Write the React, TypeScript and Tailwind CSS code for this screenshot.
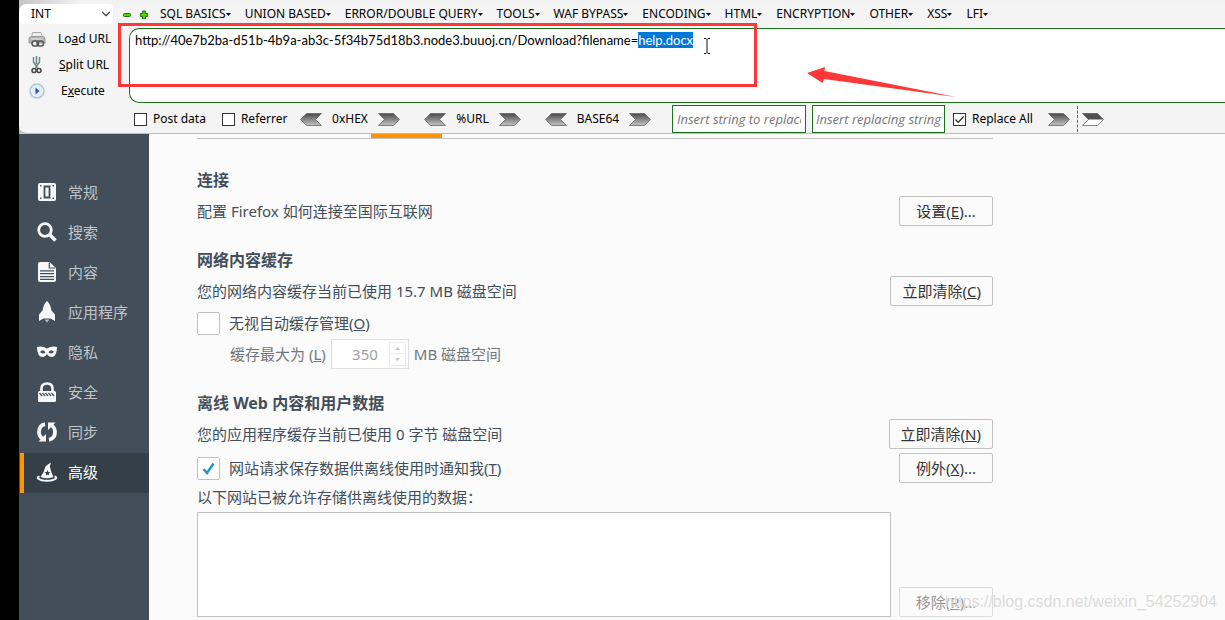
import { useEffect, useRef } from 'react'
import type { ReactNode } from 'react'
import { ChevronDown } from 'lucide-react'

const menus = ['SQL BASICS', 'UNION BASED', 'ERROR/DOUBLE QUERY', 'TOOLS', 'WAF BYPASS', 'ENCODING', 'HTML', 'ENCRYPTION', 'OTHER', 'XSS', 'LFI']

const url = 'http://40e7b2ba-d51b-4b9a-ab3c-5f34b75d18b3.node3.buuoj.cn/Download?filename=help.docx'

function Arrow({ left, hollow, label }: { left?: boolean; hollow?: boolean; label: string }) {
  return (
    <button aria-label={label} className="shrink-0">
      <svg width="22" height="13" viewBox="0 0 22 13" className={left ? 'rotate-180' : ''}>
        <defs>
          <linearGradient id="metal" x1="0" y1="0" x2="0" y2="1">
            <stop offset="0" stopColor="#4a4a4a" />
            <stop offset="1" stopColor="#c4c4c4" />
          </linearGradient>
          <linearGradient id="metalUp" x1="0" y1="1" x2="0" y2="0">
            <stop offset="0" stopColor="#4a4a4a" />
            <stop offset="1" stopColor="#c4c4c4" />
          </linearGradient>
        </defs>
        <path d="M0.5 0.5H15.5L21.5 6.5 15.5 12.5H0.5L6.5 6.5Z" fill={hollow ? '#fff' : left ? 'url(#metalUp)' : 'url(#metal)'} stroke="#666" strokeWidth="0.8" />
        {hollow && <path d="M0.5 0.5H15.5L21.5 6.5H6.5Z" fill="#505050" />}
      </svg>
    </button>
  )
}

function Codec({ name, className }: { name: string; className: string }) {
  return (
    <div className={`flex items-center justify-between ${className}`}>
      <Arrow left label={`${name} decode`} />
      <span>{name}</span>
      <Arrow label={`${name} encode`} />
    </div>
  )
}

function SmallCheck({ label, checked }: { label: string; checked?: boolean }) {
  return (
    <label className="flex items-center gap-[6px] whitespace-nowrap">
      <span className="relative flex">
        <input type="checkbox" defaultChecked={checked} className="peer size-[13px] appearance-none border border-[#333] bg-white" />
        <svg viewBox="0 0 13 13" className="pointer-events-none absolute inset-0 hidden size-[13px] peer-checked:block">
          <path d="M2.5 6.5L5.2 9.3 10.7 3.5" fill="none" stroke="#222" strokeWidth="1.2" />
        </svg>
      </span>
      {label}
    </label>
  )
}

function Toolbar() {
  const box = useRef<HTMLTextAreaElement>(null)

  useEffect(() => {
    box.current?.focus()
    box.current?.setSelectionRange(url.length - 9, url.length)
  }, [])

  return (
    <header className="relative bg-linear-to-r from-[#c4c4c4] to-[#f2f2f2] to-[60px] pt-1 text-[12px] leading-4 text-black">
      <div className="h-[130px] overflow-hidden rounded-l-lg border-b border-[#bdbdbd] bg-[#f4f4f4]">
        <div className="flex h-5 items-center">
          <div className="relative">
            <select aria-label="Type" className="h-5 w-[94px] appearance-none rounded-sm bg-white pl-3 leading-4">
              <option>INT</option>
            </select>
            <ChevronDown size={14} strokeWidth={2} className="pointer-events-none absolute top-[3px] right-0 text-[#444]" />
          </div>
          <button aria-label="Remove" className="ml-[10px]">
            <svg width="8" height="9" viewBox="0 0 8 9"><rect x="0.5" y="3.5" width="7" height="3" rx="1" fill="#4fd10a" stroke="#1c7a00" /></svg>
          </button>
          <button aria-label="Add" className="ml-[9px]">
            <svg width="8" height="9" viewBox="0 0 8 9"><path d="M2.5 1H5.5V3.5H7.5V6.5H5.5V8.5H2.5V6.5H0.5V3.5H2.5Z" fill="#4fd10a" stroke="#1c7a00" /></svg>
          </button>
          <nav className="ml-3 flex gap-[14px] whitespace-nowrap">
            {menus.map((m) => (
              <button key={m} className="flex items-center">
                {m}
                <svg width="5" height="3" viewBox="0 0 5 3"><path d="M0 0H5L2.5 3Z" fill="#111" /></svg>
              </button>
            ))}
          </nav>
        </div>
        <div className="flex">
          <div className="flex w-[110px] shrink-0 flex-col pt-[2px]">
            <button className="flex h-[26px] items-center pl-[9px]">
              <svg width="18" height="18" viewBox="0 0 18 18">
                <path d="M4.5 2.5H13L14.5 7H3.5Z" fill="#eee" stroke="#aaa" />
                <path d="M1 9Q1 6.5 3.5 6.5H14.5Q17 6.5 17 9V13H1Z" fill="#b4b4b4" stroke="#999" />
                <path d="M3 9H15" stroke="#e6e6e6" />
                <rect x="4" y="11" width="6.5" height="5" rx="2.5" fill="#eee" stroke="#555" strokeWidth="1.5" />
                <rect x="9" y="11" width="6.5" height="5" rx="2.5" fill="none" stroke="#555" strokeWidth="1.5" />
              </svg>
              <span className="ml-3">Lo<u>a</u>d URL</span>
            </button>
            <button className="flex h-[26px] items-center pl-[9px]">
              <svg width="18" height="20" viewBox="0 0 18 20">
                <path d="M5.5 2V7L9.5 13M11.5 2V7L7.5 13M8.5 1V9" fill="none" stroke="#6c898c" strokeWidth="1.5" />
                <circle cx="6" cy="15.5" r="2" fill="none" stroke="#444" strokeWidth="1.5" />
                <circle cx="11" cy="15.5" r="2" fill="none" stroke="#444" strokeWidth="1.5" />
              </svg>
              <span className="ml-[13px]"><u>S</u>plit URL</span>
            </button>
            <button className="flex h-[26px] items-center pl-[9px]">
              <svg width="18" height="18" viewBox="0 0 18 18">
                <circle cx="9" cy="9" r="7" fill="#e3eefb" stroke="#b3c3dc" strokeWidth="1.5" />
                <path d="M7.5 5.5L11.5 9 7.5 12.5Z" fill="#2159b8" />
              </svg>
              <span className="ml-[15px]">E<u>x</u>ecute</span>
            </button>
          </div>
          <div className="min-w-0 flex-1 pt-1">
            <textarea ref={box} aria-label="URL" spellCheck={false} defaultValue={url} className="block h-[75px] w-full resize-none rounded-l-[10px] border border-r-0 border-[#1b741b] bg-white px-[5px] py-[3px] font-['Lato',sans-serif] text-[13px] leading-4 caret-transparent outline-none selection:bg-[#0078d7] selection:text-white" />
          </div>
        </div>
        <div className="flex h-[29px] items-center pt-px pl-[115px]">
          <div className="flex w-[166px] gap-4">
            <SmallCheck label="Post data" />
            <SmallCheck label="Referrer" />
          </div>
          <Codec name="0xHEX" className="w-[100px]" />
          <Codec name="%URL" className="ml-6 w-[97px]" />
          <Codec name="BASE64" className="ml-6 w-[106px]" />
          <input aria-label="Search" placeholder="Insert string to replace" className="ml-[21px] h-7 w-[134px] border border-[#1b741b] bg-white px-1 font-['Open_Sans',sans-serif] text-[13px] italic placeholder:text-[#757575]" />
          <input aria-label="Replacement" placeholder="Insert replacing string" className="mr-2 ml-[6px] h-7 w-[133px] border border-[#1b741b] bg-white pl-[3px] font-['Open_Sans',sans-serif] text-[13px] italic placeholder:text-[#757575]" />
          <div className="flex w-[95px]">
            <SmallCheck label="Replace All" checked />
          </div>
          <Arrow label="Replace" />
          <div className="mr-1 ml-[7px] h-[26px] border-l border-dashed border-[#666]" />
          <Arrow hollow label="Replace in selection" />
        </div>
      </div>
      <div className="pointer-events-none absolute top-[23px] left-[99px] h-[64px] w-[639px] border-3 border-[#fd3838]" />
      <svg width="8" height="18" viewBox="0 0 8 18" className="pointer-events-none absolute top-[37px] left-[684px]">
        <path d="M1 1.5H3L4 2.5 5 1.5H7M4 2.5V15.5M1 16.5H3L4 15.5 5 16.5H7" fill="none" stroke="#111" />
      </svg>
      <svg width="150" height="31" viewBox="0 0 150 31" className="pointer-events-none absolute top-[67px] left-[788px]">
        <path d="M0 6L18 0 17.5 4 149 30 17 12 15.5 16Z" fill="#fd3838" />
      </svg>
    </header>
  )
}

const items: { name: string; icon: ReactNode }[] = [
  {
    name: '常规',
    icon: (
      <>
        <rect x="1" y="1" width="18" height="18" rx="2" fill="currentColor" />
        <path d="M7.5 4.5H12.5V15.5H7.5Z" fill="none" stroke="#424f5a" strokeWidth="1.8" />
        <path d="M3 3H4.5V4.5H3ZM15.5 3H17V4.5H15.5ZM3 15.5H4.5V17H3ZM15.5 15.5H17V17H15.5Z" fill="#424f5a" />
      </>
    ),
  },
  {
    name: '搜索',
    icon: (
      <>
        <circle cx="8" cy="8" r="6.3" fill="none" stroke="currentColor" strokeWidth="2.8" />
        <path d="M12.5 12.5L18.5 18.5" stroke="currentColor" strokeWidth="3.6" />
      </>
    ),
  },
  {
    name: '内容',
    icon: (
      <>
        <path d="M3 0H12.5L19 6V18Q19 20 17 20H3Q1 20 1 18V2Q1 0 3 0Z" fill="currentColor" />
        <path d="M12.3 0.5V6H18.5M3 8.8H17M3 11.7H17M3 14.6H17M3 17.3H17" fill="none" stroke="#424f5a" strokeWidth="1.2" />
      </>
    ),
  },
  {
    name: '应用程序',
    icon: (
      <>
        <path d="M10 -1Q13.5 2 14.5 8.5L18 12.5V19L13.5 16.5H6.5L2 19V12.5L5.5 8.5Q6.5 2 10 -1Z" fill="currentColor" />
        <path d="M7.5 17.5H12.5L10 20.5Z" fill="#b9bfc5" />
      </>
    ),
  },
  {
    name: '隐私',
    icon: (
      <path
        fillRule="evenodd"
        d="M0 5Q5 3.5 10 6.5 15 3.5 20 5 20 10 18.5 12.5 17.5 15 14 15 11.5 15 10 12 8.5 15 6 15 2.5 15 1.5 12.5 0 10 0 5ZM3 10Q6 6.5 8.5 10.5 5.5 12.5 3 10ZM17 10Q14 6.5 11.5 10.5 14.5 12.5 17 10Z"
        fill="currentColor"
      />
    ),
  },
  {
    name: '安全',
    icon: (
      <>
        <path d="M4.5 10V6.5Q4.5 1.5 10 1.5T15.5 6.5V10" fill="none" stroke="currentColor" strokeWidth="2.6" />
        <rect x="1" y="9" width="18" height="11" rx="1.5" fill="currentColor" />
        <path d="M2.5 11L5 14M5.5 11L8 14M8.5 11L11 14M11.5 11L14 14M14.5 11L17 14" stroke="#424f5a" strokeWidth="1.3" />
      </>
    ),
  },
  {
    name: '同步',
    icon: (
      <>
        <path d="M8 2.2Q2 3.5 2 10 2 14.5 6 17" fill="none" stroke="currentColor" strokeWidth="3.8" />
        <path d="M12 17.8Q18 16.5 18 10 18 5.5 14 3" fill="none" stroke="currentColor" strokeWidth="3.8" />
        <path d="M1.5 19.5H9V12ZM18.5 0.5H11V8Z" fill="currentColor" />
      </>
    ),
  },
  {
    name: '高级',
    icon: (
      <>
        <path d="M3.5 15Q7.5 9.5 8.5 4.5 11 2 14 0.5L12.8 4.5Q14 10 16.5 15 10 17.5 3.5 15Z" fill="currentColor" />
        <path d="M10.5 8L11.3 10 13.5 10.2 11.8 11.5 12.3 13.5 10.5 12.4 8.7 13.5 9.2 11.5 7.5 10.2 9.7 10Z" fill="#343f48" />
        <path d="M2.5 14.5Q0 15 1 16.5 4 18.8 10 18.8T19 16.5Q20 15 17.5 14.5" fill="none" stroke="currentColor" strokeWidth="2" />
      </>
    ),
  },
]

function Sidebar() {
  return (
    <nav className="w-[130px] shrink-0 bg-[#424f5a] pt-[39px] pl-px">
      {items.map((item) => {
        const active = item.name === '高级'
        return (
          <a
            key={item.name}
            href="#"
            className={`flex h-10 items-center gap-[11px] border-l-4 pb-[2px] pl-[13px] ${active ? 'border-[#ff9500] bg-[#343f48] text-white' : 'border-transparent text-[#c1c5c9]'}`}
          >
            <svg width="20" height="20" viewBox="0 0 20 20" className="shrink-0 overflow-visible text-[#f8f8fa]">{item.icon}</svg>
            <span>{item.name}</span>
          </a>
        )
      })}
    </nav>
  )
}

function Button({ children, disabled }: { children: ReactNode; disabled?: boolean }) {
  return (
    <button disabled={disabled} className="h-[30px] min-w-[94px] shrink-0 rounded-xs border border-[#c1c1c1] bg-[#fbfbfb] px-[11px] text-[#333] disabled:opacity-50">
      {children}
    </button>
  )
}

function Check({ children, checked }: { children: ReactNode; checked?: boolean }) {
  return (
    <label className="flex h-6 items-center gap-[9px]">
      <span className="relative flex">
        <input type="checkbox" defaultChecked={checked} className="peer size-[23px] appearance-none rounded-xs border border-[#c1c1c1] bg-white" />
        <svg viewBox="0 0 23 23" className="pointer-events-none absolute inset-0 hidden size-[23px] peer-checked:block">
          <path d="M6.5 12L10 16 16.5 6.5" fill="none" stroke="#2292d0" strokeWidth="2.4" />
        </svg>
      </span>
      <span>{children}</span>
    </label>
  )
}

export default function App() {
  return (
    <div className="relative flex min-h-screen overflow-hidden bg-[#fbfbfb] font-['Noto_Sans','Noto_Sans_CJK_SC',sans-serif]">
      <div className="w-[19px] shrink-0 bg-black" />
      <div className="flex min-w-0 flex-1 flex-col">
        <Toolbar />
        <div className="flex flex-1 text-[15px] leading-6 text-[#424e5a]">
          <Sidebar />
          <main className="ml-12 w-full max-w-[796px]">
            <div className="h-[5px] border-b border-[#c1c1c1]">
              <div className="ml-[174px] h-1 w-[71px] bg-[#ff9500]" />
            </div>
            <section className="pt-[29px]">
              <h2 className="text-[16px] font-bold">连接</h2>
              <div className="mt-1 flex items-center justify-between">
                <p>配置 Firefox 如何连接至国际互联网</p>
                <Button>设置(<u>E</u>)...</Button>
              </div>
            </section>
            <section className="pt-[22px]">
              <h2 className="text-[16px] font-bold">网络内容缓存</h2>
              <div className="mt-1 flex items-center justify-between">
                <p>您的网络内容缓存当前已使用 15.7 MB 磁盘空间</p>
                <Button>立即清除(<u>C</u>)</Button>
              </div>
              <div className="mt-[5px] flex">
                <Check>无视自动缓存管理(<u>O</u>)</Check>
              </div>
              <div className="mt-1 flex h-[30px] items-center gap-[5px] pl-[33px] text-[#70777e]">
                <label htmlFor="cache">缓存最大为 (<u>L</u>)</label>
                <div className="flex h-[30px] w-[78px] items-center border border-[#dedede] bg-white pr-[2px]">
                  <input id="cache" disabled defaultValue="350" className="w-0 flex-1 pr-[11px] text-right text-[#a0a0a0]" />
                  <div className="flex w-[17px] flex-col border border-[#ececec]">
                    <button disabled aria-label="Increase" className="flex h-[11px] items-center justify-center border-b border-[#ececec]">
                      <svg width="5" height="3" viewBox="0 0 5 3"><path d="M0 3H5L2.5 0Z" fill="#c8c8c8" /></svg>
                    </button>
                    <button disabled aria-label="Decrease" className="flex h-[11px] items-center justify-center">
                      <svg width="5" height="3" viewBox="0 0 5 3"><path d="M0 0H5L2.5 3Z" fill="#c8c8c8" /></svg>
                    </button>
                  </div>
                </div>
                <span>MB 磁盘空间</span>
              </div>
            </section>
            <section className="pt-[22px]">
              <h2 className="text-[16px] font-bold">离线 Web 内容和用户数据</h2>
              <div className="mt-1 flex items-center justify-between">
                <p>您的应用程序缓存当前已使用 0 字节 磁盘空间</p>
                <Button>立即清除(<u>N</u>)</Button>
              </div>
              <div className="mt-1 flex items-center justify-between">
                <Check checked>网站请求保存数据供离线使用时通知我(<u>T</u>)</Check>
                <Button>例外(<u>X</u>)...</Button>
              </div>
              <p className="mt-[2px]">以下网站已被允许存储供离线使用的数据：</p>
              <div className="mt-[3px] flex items-end gap-2">
                <div className="h-[105px] flex-1 border border-[#c1c1c1] bg-white" />
                <Button disabled>移除(<u>R</u>)...</Button>
              </div>
            </section>
          </main>
        </div>
      </div>
      <div className="pointer-events-none absolute right-2 bottom-[6px] font-['Liberation_Sans',sans-serif] text-[16px] leading-6 text-[#dcdcdc]">https://blog.csdn.net/weixin_54252904</div>
    </div>
  )
}
